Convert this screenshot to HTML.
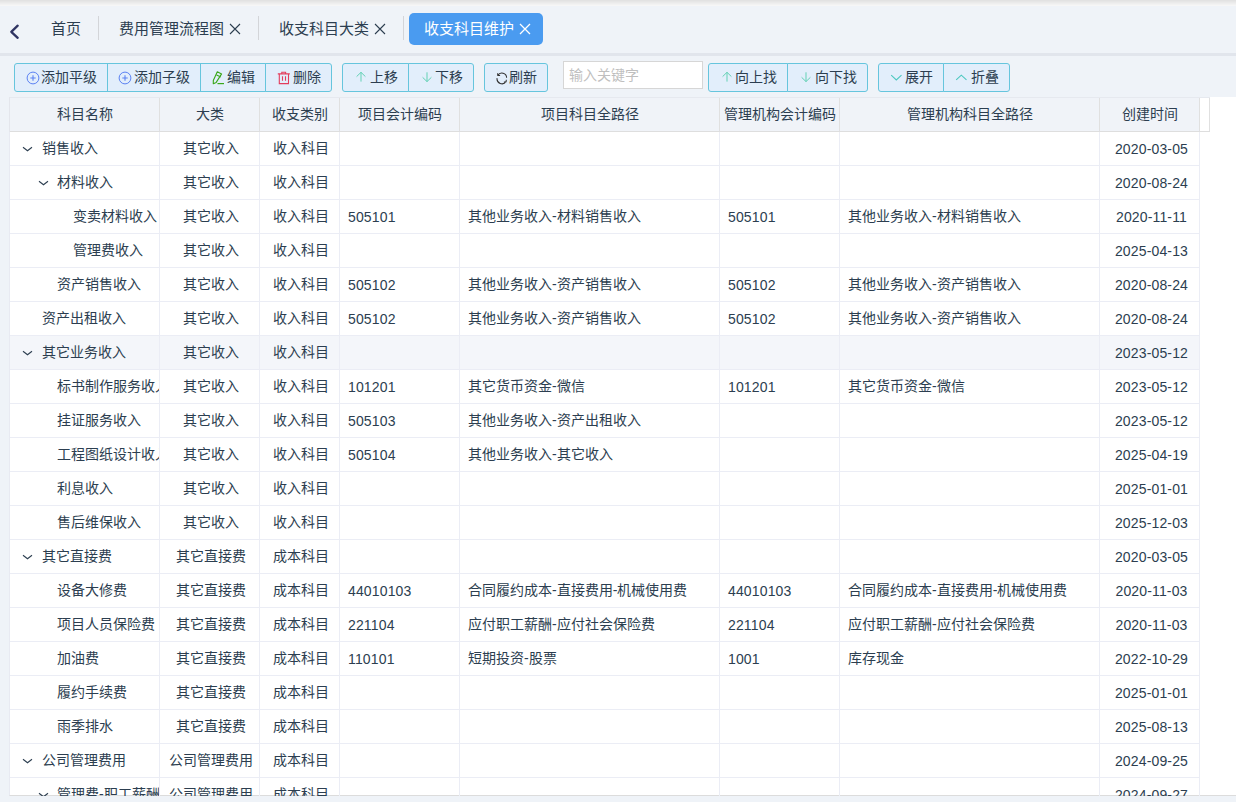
<!DOCTYPE html>
<html lang="zh-CN"><head><meta charset="utf-8">
<style>
*{box-sizing:border-box;margin:0;padding:0}
html,body{width:1236px;height:802px;overflow:hidden;background:#eff3f8;font-family:"Liberation Sans",sans-serif;color:#2c3e50;}
.topgrad{position:absolute;left:0;top:0;width:1236px;height:6px;background:linear-gradient(#e0e0e0,#f8f8f8);}
.band{position:absolute;left:0;top:53px;width:1236px;height:3px;background:#e1e5ec;}
.abs{position:absolute;}
.tab{position:absolute;top:13px;height:32px;line-height:32px;font-size:15px;color:#2c3e50;white-space:nowrap;}
.sep{position:absolute;top:16px;width:1px;height:24px;background:#d3d5d9;}
.act{background:#4a9bf0;border-radius:5px;color:#fff;}
.btn{position:absolute;top:63px;height:29px;background:#e2eefb;border:1px solid #66c5dd;font-size:14px;line-height:27px;color:#2c3e50;white-space:nowrap;}
.btn span{position:absolute;top:0;}
.btn svg{position:absolute;}
.inp{position:absolute;left:563px;top:61px;width:140px;height:28px;background:#fff;border:1px solid #d6d6d6;font-size:14px;line-height:26px;color:#bfbfbf;padding-left:5px;}
.tbl{position:absolute;left:9px;top:97px;width:1227px;height:699px;background:#fff;border-left:1px solid #e8eaf2;border-bottom:1px solid #dcdcdc;overflow:hidden;}
.hd{position:absolute;top:97px;height:35px;background:#f0f3f8;border-top:1px solid #e6e9ef;border-bottom:1px solid #dedede;}
.hc{position:absolute;top:0;height:33px;line-height:33px;font-size:14px;text-align:center;border-right:1px solid #e0e0e0;color:#2c3e50;}
.row{position:absolute;left:10px;width:1190px;height:34px;border-bottom:1px solid #ebedf5;}
.hl{background:#f4f6fa;}
.c{position:absolute;top:0;height:33px;line-height:33px;font-size:14px;border-right:1px solid #ebedf5;overflow:hidden;white-space:nowrap;color:#2c3e50;}
.c.l{padding-left:8px;}
.c.cc{text-align:center;padding-left:2px;}
.nm{position:absolute;top:0;}
</style></head><body>
<div class="topgrad"></div>
<svg class="abs" style="left:8px;top:22px" width="14" height="20" viewBox="0 0 14 20"><path d="M9.7 3.7 L3.3 9.8 L9.7 15.8" fill="none" stroke="#2f3462" stroke-width="2.3" stroke-linecap="round" stroke-linejoin="round"/></svg>
<div class="tab" style="left:51px">首页</div>
<div class="sep" style="left:98px"></div>
<div class="tab" style="left:119px">费用管理流程图</div>
<svg class="abs" style="left:229px;top:23px" width="12" height="12" viewBox="0 0 12 12"><path d="M1 1L11 11M11 1L1 11" stroke="#2c3e50" stroke-width="1.1"/></svg>
<div class="sep" style="left:258px"></div>
<div class="tab" style="left:279px">收支科目大类</div>
<svg class="abs" style="left:374px;top:23px" width="12" height="12" viewBox="0 0 12 12"><path d="M1 1L11 11M11 1L1 11" stroke="#2c3e50" stroke-width="1.1"/></svg>
<div class="sep" style="left:403px"></div>
<div class="tab act" style="left:409px;width:134px;padding-left:15px">收支科目维护</div>
<svg class="abs" style="left:519px;top:23px" width="12" height="12" viewBox="0 0 12 12"><path d="M1 1L11 11M11 1L1 11" stroke="#fff" stroke-width="1.3"/></svg>
<div class="band"></div>
<div class="btn" style="left:14px;width:94px;border-radius:3px 0 0 3px"><svg style="left:11px;top:7px" width="14" height="14" viewBox="0 0 14 14"><circle cx="7" cy="7" r="5.9" fill="none" stroke="#5b82f3" stroke-width="1"/><path d="M4.3 7H9.7M7 4.3V9.7" stroke="#5b82f3" stroke-width="1.1"/></svg><span style="left:26px">添加平级</span></div>
<div class="btn" style="left:107px;width:94px;border-radius:0"><svg style="left:10px;top:7px" width="14" height="14" viewBox="0 0 14 14"><circle cx="7" cy="7" r="5.9" fill="none" stroke="#5b82f3" stroke-width="1"/><path d="M4.3 7H9.7M7 4.3V9.7" stroke="#5b82f3" stroke-width="1.1"/></svg><span style="left:26px">添加子级</span></div>
<div class="btn" style="left:200px;width:66px;border-radius:0"><svg style="left:11px;top:6px" width="14" height="16" viewBox="0 0 14 16"><path d="M5.3 1.7 L9.6 3.9 L4.2 12.4 L1.3 13.8 L1.3 10.5 Z M4.6 5 L8.8 7" fill="none" stroke="#3aa81a" stroke-width="1.1" stroke-linejoin="round"/><path d="M5.5 13.6H12" stroke="#3aa81a" stroke-width="1.2"/></svg><span style="left:26px">编辑</span></div>
<div class="btn" style="left:265px;width:67px;border-radius:0 3px 3px 0"><svg style="left:10px;top:7px" width="14" height="16" viewBox="0 0 14 16"><path d="M1.8 2.9H13.8M5.8 2.9V1.3H9.6V2.9M3.3 2.9V12.6H12.5V2.9M6.5 5.2V9.8M9.5 5.2V9.8" fill="none" stroke="#e33d5c" stroke-width="1.1"/></svg><span style="left:27px">删除</span></div>
<div class="btn" style="left:342px;width:67px;border-radius:3px 0 0 3px"><svg style="left:12px;top:7px" width="12" height="14" viewBox="0 0 12 14"><path d="M6 1.3V10.6M1.6 5.6L6 1.3L10.4 5.6" fill="none" stroke="#62d1b5" stroke-width="1"/></svg><span style="left:27px">上移</span></div>
<div class="btn" style="left:408px;width:66px;border-radius:0 3px 3px 0"><svg style="left:12px;top:7px" width="12" height="14" viewBox="0 0 12 14"><path d="M6 1.3V10.6M1.6 6.3L6 10.6L10.4 6.3" fill="none" stroke="#62d1b5" stroke-width="1"/></svg><span style="left:26px">下移</span></div>
<div class="btn" style="left:484px;width:64px;border-radius:3px"><svg style="left:11px;top:7px" width="14" height="14" viewBox="0 0 14 14"><path d="M1.6 2.3 L1.8 4.5 L4.1 4.4 M1.8 4.4 A4.7 4.7 0 0 1 10.6 6.8 M10.3 8.7 L10.1 10.8 L7.9 10.9 M1.1 7.1 A4.9 4.9 0 0 0 10.0 10.6" fill="none" stroke="#333" stroke-width="1.05"/></svg><span style="left:24px">刷新</span></div>
<div class="inp">输入关键字</div>
<div class="btn" style="left:708px;width:80px;border-radius:3px 0 0 3px"><svg style="left:12px;top:7px" width="12" height="14" viewBox="0 0 12 14"><path d="M6 1.3V10.6M1.6 5.6L6 1.3L10.4 5.6" fill="none" stroke="#62d1b5" stroke-width="1"/></svg><span style="left:26px">向上找</span></div>
<div class="btn" style="left:787px;width:81px;border-radius:0 3px 3px 0"><svg style="left:12px;top:7px" width="12" height="14" viewBox="0 0 12 14"><path d="M6 1.3V10.6M1.6 6.3L6 10.6L10.4 6.3" fill="none" stroke="#62d1b5" stroke-width="1"/></svg><span style="left:27px">向下找</span></div>
<div class="btn" style="left:878px;width:66px;border-radius:3px 0 0 3px"><svg style="left:11px;top:8px" width="14" height="12" viewBox="0 0 14 12"><path d="M1.2 3.2L6.3 7.9L11.5 3.2" fill="none" stroke="#4cc8c0" stroke-width="1.1"/></svg><span style="left:26px">展开</span></div>
<div class="btn" style="left:943px;width:67px;border-radius:0 3px 3px 0"><svg style="left:11px;top:8px" width="14" height="12" viewBox="0 0 14 12"><path d="M1.2 7.9L6.3 3.2L11.5 7.9" fill="none" stroke="#4cc8c0" stroke-width="1.1"/></svg><span style="left:27px">折叠</span></div>
<div class="tbl"></div>
<div class="abs" style="left:9px;top:97px;width:1px;height:35px;background:#e4e6ec"></div>
<div class="hd" style="left:10px;width:1200px"><div class="hc" style="left:0px;width:150px">科目名称</div><div class="hc" style="left:150px;width:100px">大类</div><div class="hc" style="left:250px;width:80px">收支类别</div><div class="hc" style="left:330px;width:120px">项目会计编码</div><div class="hc" style="left:450px;width:260px">项目科目全路径</div><div class="hc" style="left:710px;width:120px">管理机构会计编码</div><div class="hc" style="left:830px;width:260px">管理机构科目全路径</div><div class="hc" style="left:1090px;width:100px">创建时间</div><div class="hc" style="left:1190px;width:10px;background:#fff;border-right:1px solid #e0e0e0"></div></div>
<div class="row" style="top:132px"><div class="c" style="left:0;width:150px"><svg class="abs" style="left:12.0px;top:12px" width="12" height="8" viewBox="0 0 12 8"><path d="M1 3.2L5.5 6.7L10 3.2" fill="none" stroke="#2c3e50" stroke-width="1.1"/></svg><span class="nm" style="left:31.5px">销售收入</span></div><div class="c cc" style="left:150px;width:100px">其它收入</div><div class="c cc" style="left:250px;width:80px">收入科目</div><div class="c l" style="left:330px;width:120px"></div><div class="c l" style="left:450px;width:260px"></div><div class="c l" style="left:710px;width:120px"></div><div class="c l" style="left:830px;width:260px"></div><div class="c cc" style="left:1090px;width:100px"><span style="position:relative;top:1px;left:1px;letter-spacing:0.15px">2020-03-05</span></div></div>
<div class="row" style="top:166px"><div class="c" style="left:0;width:150px"><svg class="abs" style="left:27.5px;top:12px" width="12" height="8" viewBox="0 0 12 8"><path d="M1 3.2L5.5 6.7L10 3.2" fill="none" stroke="#2c3e50" stroke-width="1.1"/></svg><span class="nm" style="left:47.0px">材料收入</span></div><div class="c cc" style="left:150px;width:100px">其它收入</div><div class="c cc" style="left:250px;width:80px">收入科目</div><div class="c l" style="left:330px;width:120px"></div><div class="c l" style="left:450px;width:260px"></div><div class="c l" style="left:710px;width:120px"></div><div class="c l" style="left:830px;width:260px"></div><div class="c cc" style="left:1090px;width:100px"><span style="position:relative;top:1px;left:1px;letter-spacing:0.15px">2020-08-24</span></div></div>
<div class="row" style="top:200px"><div class="c" style="left:0;width:150px"><span class="nm" style="left:62.5px">变卖材料收入</span></div><div class="c cc" style="left:150px;width:100px">其它收入</div><div class="c cc" style="left:250px;width:80px">收入科目</div><div class="c l" style="left:330px;width:120px"><span style="position:relative;top:1px;left:0px;letter-spacing:0.15px">505101</span></div><div class="c l" style="left:450px;width:260px">其他业务收入-材料销售收入</div><div class="c l" style="left:710px;width:120px"><span style="position:relative;top:1px;left:0px;letter-spacing:0.15px">505101</span></div><div class="c l" style="left:830px;width:260px">其他业务收入-材料销售收入</div><div class="c cc" style="left:1090px;width:100px"><span style="position:relative;top:1px;left:1px;letter-spacing:0.15px">2020-11-11</span></div></div>
<div class="row" style="top:234px"><div class="c" style="left:0;width:150px"><span class="nm" style="left:62.5px">管理费收入</span></div><div class="c cc" style="left:150px;width:100px">其它收入</div><div class="c cc" style="left:250px;width:80px">收入科目</div><div class="c l" style="left:330px;width:120px"></div><div class="c l" style="left:450px;width:260px"></div><div class="c l" style="left:710px;width:120px"></div><div class="c l" style="left:830px;width:260px"></div><div class="c cc" style="left:1090px;width:100px"><span style="position:relative;top:1px;left:1px;letter-spacing:0.15px">2025-04-13</span></div></div>
<div class="row" style="top:268px"><div class="c" style="left:0;width:150px"><span class="nm" style="left:47.0px">资产销售收入</span></div><div class="c cc" style="left:150px;width:100px">其它收入</div><div class="c cc" style="left:250px;width:80px">收入科目</div><div class="c l" style="left:330px;width:120px"><span style="position:relative;top:1px;left:0px;letter-spacing:0.15px">505102</span></div><div class="c l" style="left:450px;width:260px">其他业务收入-资产销售收入</div><div class="c l" style="left:710px;width:120px"><span style="position:relative;top:1px;left:0px;letter-spacing:0.15px">505102</span></div><div class="c l" style="left:830px;width:260px">其他业务收入-资产销售收入</div><div class="c cc" style="left:1090px;width:100px"><span style="position:relative;top:1px;left:1px;letter-spacing:0.15px">2020-08-24</span></div></div>
<div class="row" style="top:302px"><div class="c" style="left:0;width:150px"><span class="nm" style="left:31.5px">资产出租收入</span></div><div class="c cc" style="left:150px;width:100px">其它收入</div><div class="c cc" style="left:250px;width:80px">收入科目</div><div class="c l" style="left:330px;width:120px"><span style="position:relative;top:1px;left:0px;letter-spacing:0.15px">505102</span></div><div class="c l" style="left:450px;width:260px">其他业务收入-资产销售收入</div><div class="c l" style="left:710px;width:120px"><span style="position:relative;top:1px;left:0px;letter-spacing:0.15px">505102</span></div><div class="c l" style="left:830px;width:260px">其他业务收入-资产销售收入</div><div class="c cc" style="left:1090px;width:100px"><span style="position:relative;top:1px;left:1px;letter-spacing:0.15px">2020-08-24</span></div></div>
<div class="row hl" style="top:336px"><div class="c" style="left:0;width:150px"><svg class="abs" style="left:12.0px;top:12px" width="12" height="8" viewBox="0 0 12 8"><path d="M1 3.2L5.5 6.7L10 3.2" fill="none" stroke="#2c3e50" stroke-width="1.1"/></svg><span class="nm" style="left:31.5px">其它业务收入</span></div><div class="c cc" style="left:150px;width:100px">其它收入</div><div class="c cc" style="left:250px;width:80px">收入科目</div><div class="c l" style="left:330px;width:120px"></div><div class="c l" style="left:450px;width:260px"></div><div class="c l" style="left:710px;width:120px"></div><div class="c l" style="left:830px;width:260px"></div><div class="c cc" style="left:1090px;width:100px"><span style="position:relative;top:1px;left:1px;letter-spacing:0.15px">2023-05-12</span></div></div>
<div class="row" style="top:370px"><div class="c" style="left:0;width:150px"><span class="nm" style="left:47.0px">标书制作服务收入</span></div><div class="c cc" style="left:150px;width:100px">其它收入</div><div class="c cc" style="left:250px;width:80px">收入科目</div><div class="c l" style="left:330px;width:120px"><span style="position:relative;top:1px;left:0px;letter-spacing:0.15px">101201</span></div><div class="c l" style="left:450px;width:260px">其它货币资金-微信</div><div class="c l" style="left:710px;width:120px"><span style="position:relative;top:1px;left:0px;letter-spacing:0.15px">101201</span></div><div class="c l" style="left:830px;width:260px">其它货币资金-微信</div><div class="c cc" style="left:1090px;width:100px"><span style="position:relative;top:1px;left:1px;letter-spacing:0.15px">2023-05-12</span></div></div>
<div class="row" style="top:404px"><div class="c" style="left:0;width:150px"><span class="nm" style="left:47.0px">挂证服务收入</span></div><div class="c cc" style="left:150px;width:100px">其它收入</div><div class="c cc" style="left:250px;width:80px">收入科目</div><div class="c l" style="left:330px;width:120px"><span style="position:relative;top:1px;left:0px;letter-spacing:0.15px">505103</span></div><div class="c l" style="left:450px;width:260px">其他业务收入-资产出租收入</div><div class="c l" style="left:710px;width:120px"></div><div class="c l" style="left:830px;width:260px"></div><div class="c cc" style="left:1090px;width:100px"><span style="position:relative;top:1px;left:1px;letter-spacing:0.15px">2023-05-12</span></div></div>
<div class="row" style="top:438px"><div class="c" style="left:0;width:150px"><span class="nm" style="left:47.0px">工程图纸设计收入</span></div><div class="c cc" style="left:150px;width:100px">其它收入</div><div class="c cc" style="left:250px;width:80px">收入科目</div><div class="c l" style="left:330px;width:120px"><span style="position:relative;top:1px;left:0px;letter-spacing:0.15px">505104</span></div><div class="c l" style="left:450px;width:260px">其他业务收入-其它收入</div><div class="c l" style="left:710px;width:120px"></div><div class="c l" style="left:830px;width:260px"></div><div class="c cc" style="left:1090px;width:100px"><span style="position:relative;top:1px;left:1px;letter-spacing:0.15px">2025-04-19</span></div></div>
<div class="row" style="top:472px"><div class="c" style="left:0;width:150px"><span class="nm" style="left:47.0px">利息收入</span></div><div class="c cc" style="left:150px;width:100px">其它收入</div><div class="c cc" style="left:250px;width:80px">收入科目</div><div class="c l" style="left:330px;width:120px"></div><div class="c l" style="left:450px;width:260px"></div><div class="c l" style="left:710px;width:120px"></div><div class="c l" style="left:830px;width:260px"></div><div class="c cc" style="left:1090px;width:100px"><span style="position:relative;top:1px;left:1px;letter-spacing:0.15px">2025-01-01</span></div></div>
<div class="row" style="top:506px"><div class="c" style="left:0;width:150px"><span class="nm" style="left:47.0px">售后维保收入</span></div><div class="c cc" style="left:150px;width:100px">其它收入</div><div class="c cc" style="left:250px;width:80px">收入科目</div><div class="c l" style="left:330px;width:120px"></div><div class="c l" style="left:450px;width:260px"></div><div class="c l" style="left:710px;width:120px"></div><div class="c l" style="left:830px;width:260px"></div><div class="c cc" style="left:1090px;width:100px"><span style="position:relative;top:1px;left:1px;letter-spacing:0.15px">2025-12-03</span></div></div>
<div class="row" style="top:540px"><div class="c" style="left:0;width:150px"><svg class="abs" style="left:12.0px;top:12px" width="12" height="8" viewBox="0 0 12 8"><path d="M1 3.2L5.5 6.7L10 3.2" fill="none" stroke="#2c3e50" stroke-width="1.1"/></svg><span class="nm" style="left:31.5px">其它直接费</span></div><div class="c cc" style="left:150px;width:100px">其它直接费</div><div class="c cc" style="left:250px;width:80px">成本科目</div><div class="c l" style="left:330px;width:120px"></div><div class="c l" style="left:450px;width:260px"></div><div class="c l" style="left:710px;width:120px"></div><div class="c l" style="left:830px;width:260px"></div><div class="c cc" style="left:1090px;width:100px"><span style="position:relative;top:1px;left:1px;letter-spacing:0.15px">2020-03-05</span></div></div>
<div class="row" style="top:574px"><div class="c" style="left:0;width:150px"><span class="nm" style="left:47.0px">设备大修费</span></div><div class="c cc" style="left:150px;width:100px">其它直接费</div><div class="c cc" style="left:250px;width:80px">成本科目</div><div class="c l" style="left:330px;width:120px"><span style="position:relative;top:1px;left:0px;letter-spacing:0.15px">44010103</span></div><div class="c l" style="left:450px;width:260px">合同履约成本-直接费用-机械使用费</div><div class="c l" style="left:710px;width:120px"><span style="position:relative;top:1px;left:0px;letter-spacing:0.15px">44010103</span></div><div class="c l" style="left:830px;width:260px">合同履约成本-直接费用-机械使用费</div><div class="c cc" style="left:1090px;width:100px"><span style="position:relative;top:1px;left:1px;letter-spacing:0.15px">2020-11-03</span></div></div>
<div class="row" style="top:608px"><div class="c" style="left:0;width:150px"><span class="nm" style="left:47.0px">项目人员保险费</span></div><div class="c cc" style="left:150px;width:100px">其它直接费</div><div class="c cc" style="left:250px;width:80px">成本科目</div><div class="c l" style="left:330px;width:120px"><span style="position:relative;top:1px;left:0px;letter-spacing:0.15px">221104</span></div><div class="c l" style="left:450px;width:260px">应付职工薪酬-应付社会保险费</div><div class="c l" style="left:710px;width:120px"><span style="position:relative;top:1px;left:0px;letter-spacing:0.15px">221104</span></div><div class="c l" style="left:830px;width:260px">应付职工薪酬-应付社会保险费</div><div class="c cc" style="left:1090px;width:100px"><span style="position:relative;top:1px;left:1px;letter-spacing:0.15px">2020-11-03</span></div></div>
<div class="row" style="top:642px"><div class="c" style="left:0;width:150px"><span class="nm" style="left:47.0px">加油费</span></div><div class="c cc" style="left:150px;width:100px">其它直接费</div><div class="c cc" style="left:250px;width:80px">成本科目</div><div class="c l" style="left:330px;width:120px"><span style="position:relative;top:1px;left:0px;letter-spacing:0.15px">110101</span></div><div class="c l" style="left:450px;width:260px">短期投资-股票</div><div class="c l" style="left:710px;width:120px"><span style="position:relative;top:1px;left:0px;letter-spacing:0.15px">1001</span></div><div class="c l" style="left:830px;width:260px">库存现金</div><div class="c cc" style="left:1090px;width:100px"><span style="position:relative;top:1px;left:1px;letter-spacing:0.15px">2022-10-29</span></div></div>
<div class="row" style="top:676px"><div class="c" style="left:0;width:150px"><span class="nm" style="left:47.0px">履约手续费</span></div><div class="c cc" style="left:150px;width:100px">其它直接费</div><div class="c cc" style="left:250px;width:80px">成本科目</div><div class="c l" style="left:330px;width:120px"></div><div class="c l" style="left:450px;width:260px"></div><div class="c l" style="left:710px;width:120px"></div><div class="c l" style="left:830px;width:260px"></div><div class="c cc" style="left:1090px;width:100px"><span style="position:relative;top:1px;left:1px;letter-spacing:0.15px">2025-01-01</span></div></div>
<div class="row" style="top:710px"><div class="c" style="left:0;width:150px"><span class="nm" style="left:47.0px">雨季排水</span></div><div class="c cc" style="left:150px;width:100px">其它直接费</div><div class="c cc" style="left:250px;width:80px">成本科目</div><div class="c l" style="left:330px;width:120px"></div><div class="c l" style="left:450px;width:260px"></div><div class="c l" style="left:710px;width:120px"></div><div class="c l" style="left:830px;width:260px"></div><div class="c cc" style="left:1090px;width:100px"><span style="position:relative;top:1px;left:1px;letter-spacing:0.15px">2025-08-13</span></div></div>
<div class="row" style="top:744px"><div class="c" style="left:0;width:150px"><svg class="abs" style="left:12.0px;top:12px" width="12" height="8" viewBox="0 0 12 8"><path d="M1 3.2L5.5 6.7L10 3.2" fill="none" stroke="#2c3e50" stroke-width="1.1"/></svg><span class="nm" style="left:31.5px">公司管理费用</span></div><div class="c cc" style="left:150px;width:100px">公司管理费用</div><div class="c cc" style="left:250px;width:80px">成本科目</div><div class="c l" style="left:330px;width:120px"></div><div class="c l" style="left:450px;width:260px"></div><div class="c l" style="left:710px;width:120px"></div><div class="c l" style="left:830px;width:260px"></div><div class="c cc" style="left:1090px;width:100px"><span style="position:relative;top:1px;left:1px;letter-spacing:0.15px">2024-09-25</span></div></div>
<div class="row" style="top:778px"><div class="c" style="left:0;width:150px"><svg class="abs" style="left:27.5px;top:12px" width="12" height="8" viewBox="0 0 12 8"><path d="M1 3.2L5.5 6.7L10 3.2" fill="none" stroke="#2c3e50" stroke-width="1.1"/></svg><span class="nm" style="left:47.0px">管理费-职工薪酬</span></div><div class="c cc" style="left:150px;width:100px">公司管理费用</div><div class="c cc" style="left:250px;width:80px">成本科目</div><div class="c l" style="left:330px;width:120px"></div><div class="c l" style="left:450px;width:260px"></div><div class="c l" style="left:710px;width:120px"></div><div class="c l" style="left:830px;width:260px"></div><div class="c cc" style="left:1090px;width:100px"><span style="position:relative;top:1px;left:1px;letter-spacing:0.15px">2024-09-27</span></div></div>
<div class="abs" style="left:0;top:796px;width:1236px;height:6px;background:#eff3f8"></div>
</body></html>
